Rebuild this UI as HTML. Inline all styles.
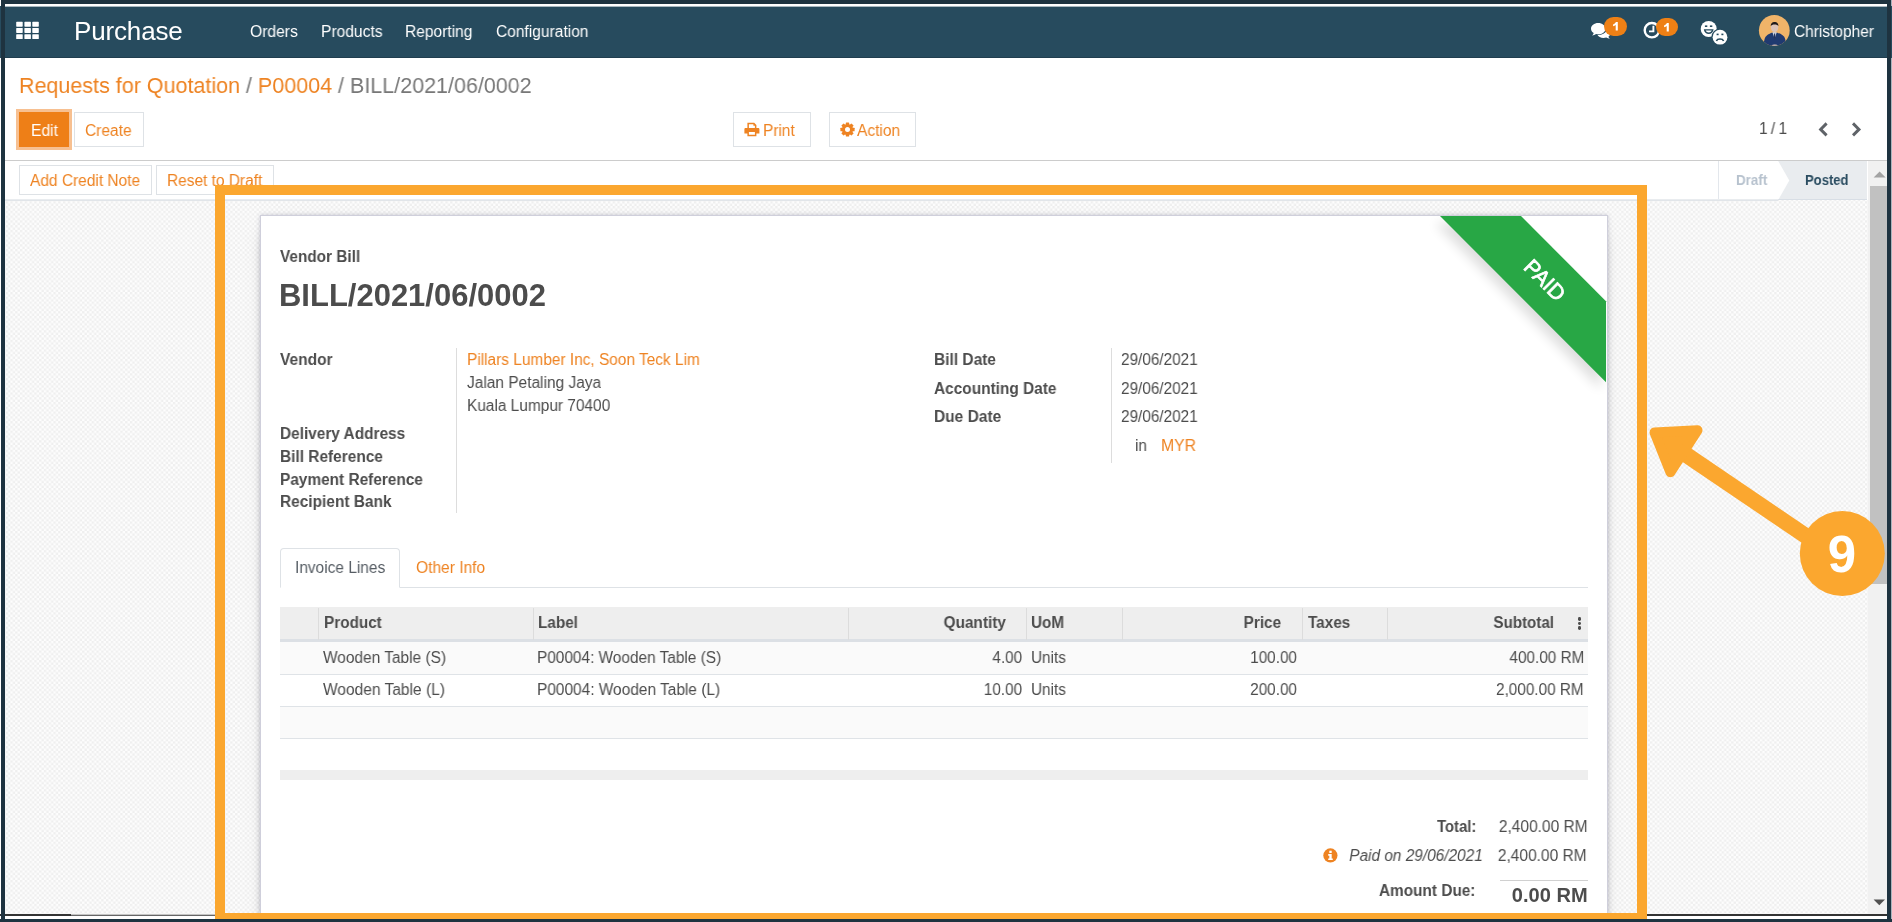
<!DOCTYPE html>
<html>
<head>
<meta charset="utf-8">
<title>Purchase - BILL/2021/06/0002</title>
<style>
*{box-sizing:border-box;margin:0;padding:0}
html,body{width:1892px;height:922px;overflow:hidden;background:#fff;font-family:"Liberation Sans",sans-serif;color:#4c4c4c;font-size:16px}
.abs{position:absolute}
.t{position:absolute;white-space:nowrap;line-height:20px;height:20px;transform:scaleX(.956);transform-origin:0 0;will-change:transform}
#frame{position:absolute;left:0;top:0;width:1892px;height:922px;overflow:hidden;background:#fff}
#nav{position:absolute;left:0;top:6px;width:1892px;height:52px;background:#274b5e}
#nav .t{color:#fff}
#bg{position:absolute;left:5px;top:200px;width:1863px;height:715px;background:#f7f7f7}
#sheet{position:absolute;left:260px;top:215px;width:1348px;height:720px;background:#fff;border:1px solid #cfcfdb;box-shadow:0 0 4px rgba(70,70,110,.25),0 5px 20px -15px #000;overflow:hidden}
.btn{position:absolute;border:1px solid #dee2e6;background:#fff}
.hl{position:absolute;height:1px;background:#dee2e6}
.vl{position:absolute;width:1px;background:#dddddd}
</style>
</head>
<body>
<div id="frame">
<div id="nav">
</div>
<svg class="abs" style="left:16px;top:21px" width="24" height="19" viewBox="0 0 24 19"><rect x="0.2" y="0.8" width="6.5" height="4.9" rx="0.6" fill="#fff"/><rect x="8.4" y="0.8" width="6.5" height="4.9" rx="0.6" fill="#fff"/><rect x="16.3" y="0.8" width="6.5" height="4.9" rx="0.6" fill="#fff"/><rect x="0.2" y="7.0" width="6.5" height="4.9" rx="0.6" fill="#fff"/><rect x="8.4" y="7.0" width="6.5" height="4.9" rx="0.6" fill="#fff"/><rect x="16.3" y="7.0" width="6.5" height="4.9" rx="0.6" fill="#fff"/><rect x="0.2" y="13.2" width="6.5" height="4.9" rx="0.6" fill="#fff"/><rect x="8.4" y="13.2" width="6.5" height="4.9" rx="0.6" fill="#fff"/><rect x="16.3" y="13.2" width="6.5" height="4.9" rx="0.6" fill="#fff"/></svg>
<div class="t" style="top:21px;left:74.0px;font-size:26px;color:#fff;letter-spacing:-0.15px;transform:scaleX(1);">Purchase</div>
<div class="t" style="top:22px;left:250.2px;color:#fff;transform:scaleX(0.9774);">Orders</div>
<div class="t" style="top:22px;left:321.0px;color:#fff;transform:scaleX(0.974);">Products</div>
<div class="t" style="top:22px;left:405.2px;color:#fff;transform:scaleX(0.9715);">Reporting</div>
<div class="t" style="top:22px;left:495.6px;color:#fff;transform:scaleX(0.9709);">Configuration</div>
<svg class="abs" style="left:1588px;top:20px" width="26" height="22" viewBox="0 0 26 22">
<path d="M15.6 18.0 C12.6 18.0 10.2 16.6 9.4 14.7 C14.3 15.0 18.6 12.6 18.9 9.4 C20.9 10.1 22.3 11.7 22.3 13.4 C22.3 14.7 21.5 15.9 20.3 16.7 C20.6 17.5 21.2 18.2 21.9 18.7 C20.6 18.7 19.3 18.3 18.2 17.6 C17.4 17.9 16.5 18.0 15.6 18.0 Z" fill="#fff"/>
<path d="M10.2 3.1 C14.2 3.1 17.4 5.6 17.4 8.7 C17.4 11.8 14.2 14.3 10.2 14.3 C9.5 14.3 8.8 14.2 8.1 14.1 C7.0 14.9 5.6 15.5 4.2 15.6 C4.2 15.6 5.4 14.6 5.7 13.1 C4.1 12.1 3.0 10.5 3.0 8.7 C3.0 5.6 6.2 3.1 10.2 3.1 Z" fill="#fff" stroke="#274b5e" stroke-width="1.1" paint-order="stroke"/>
</svg>
<div class="abs" style="left:1604px;top:17px;width:23px;height:19px;border-radius:9.5px;background:#ee8015"></div>
<svg class="abs" style="left:1612.8px;top:22.2px" width="6" height="9" viewBox="0 0 6 9"><path d="M2.9 0 H4.8 V8.5 H2.7 V2.9 C2.0 3.5 1.1 3.9 0.1 4.2 V2.5 C1.3 2.1 2.4 1.2 2.9 0 Z" fill="#fff"/></svg>
<svg class="abs" style="left:1641px;top:19px" width="22" height="22" viewBox="0 0 22 22">
<circle cx="10.9" cy="11.2" r="7.2" fill="none" stroke="#fff" stroke-width="2.4"/>
<path d="M12.4 6.8 V12.4 H8.0" fill="none" stroke="#fff" stroke-width="1.9"/>
</svg>
<div class="abs" style="left:1655.5px;top:18px;width:22px;height:18px;border-radius:9px;background:#ee8015"></div>
<svg class="abs" style="left:1663.5px;top:22.6px" width="6" height="9" viewBox="0 0 6 9"><path d="M2.9 0 H4.8 V8.5 H2.7 V2.9 C2.0 3.5 1.1 3.9 0.1 4.2 V2.5 C1.3 2.1 2.4 1.2 2.9 0 Z" fill="#fff"/></svg>
<svg class="abs" style="left:1698px;top:18px" width="34" height="30" viewBox="0 0 34 30">
<circle cx="10.7" cy="11" r="8" fill="#fff"/>
<rect x="6.9" y="7.4" width="2.4" height="1.6" fill="#274b5e"/><rect x="11.9" y="7.4" width="2.4" height="1.6" fill="#274b5e"/>
<path d="M5.8 11.2 H15.6 C15.3 14.2 13.2 15.9 10.7 15.9 C8.2 15.9 6.1 14.2 5.8 11.2 Z" fill="#274b5e"/>
<path d="M7.6 12.6 H13.8 C13.2 13.9 12.1 14.6 10.7 14.6 C9.3 14.6 8.2 13.9 7.6 12.6 Z" fill="#fff"/>
<circle cx="22" cy="19.2" r="8.6" fill="#274b5e"/>
<circle cx="22" cy="19.2" r="7.4" fill="#fff"/>
<rect x="18.6" y="15.6" width="2" height="1.6" fill="#274b5e"/><rect x="23.4" y="15.6" width="2" height="1.6" fill="#274b5e"/>
<path d="M18.4 23.0 C19.4 20.4 24.6 20.4 25.6 23.0" fill="none" stroke="#274b5e" stroke-width="1.6"/>
</svg>
<svg class="abs" style="left:1758px;top:14px" width="33" height="33" viewBox="0 0 33 33">
<defs><clipPath id="av"><circle cx="16.3" cy="16.4" r="15.4"/></clipPath></defs>
<g clip-path="url(#av)">
<rect width="33" height="33" fill="#f0b469"/>
<path d="M4.8 33 L6.6 25 C7.4 21.6 10.6 19.8 14.4 18.4 L16.6 20.6 L18.8 18.4 C22.6 19.8 26.4 21.6 27.2 25 L28.6 33 Z" fill="#203a70"/>
<path d="M14.4 18.2 L16.6 24.5 L18.8 18.2 Z" fill="#cdd5e4"/>
<path d="M16.1 19.6 L17.1 19.6 L17.4 24 L16.6 25.2 L15.8 24 Z" fill="#27335a"/>
<ellipse cx="16.6" cy="13.3" rx="3.7" ry="5.0" fill="#dcc3b8"/>
<path d="M12.8 12.3 C12.2 6.4 21.0 6.4 20.4 12.3 C19.8 9.8 13.4 9.8 12.8 12.3 Z" fill="#1f1a1a"/>
<ellipse cx="16.8" cy="31.6" rx="2.8" ry="1.0" fill="#dcc3b8"/>
</g></svg>
<div class="t" style="top:22px;left:1793.8px;color:#fff;transform:scaleX(0.9661);">Christopher</div>
<div class="t" style="top:76px;left:19.0px;font-size:22px;color:#777;transform:scaleX(0.977);"><span style="color:#ee8322">Requests for Quotation</span> / <span style="color:#ee8322">P00004</span> / BILL/2021/06/0002</div>
<div class="abs" style="left:16px;top:109px;width:56px;height:41px;background:#f7c091"></div>
<div class="abs" style="left:19px;top:112px;width:50px;height:35px;background:#ee7f17"></div>
<div class="t" style="top:121px;left:30.5px;color:#fff;transform:scaleX(0.9754);">Edit</div>
<div class="btn" style="left:74px;top:112px;width:70px;height:35px"></div>
<div class="t" style="top:121px;left:85.3px;color:#ee8322;transform:scaleX(0.9681);">Create</div>
<div class="btn" style="left:733px;top:112px;width:78px;height:35px"></div>
<svg class="abs" style="left:744px;top:122px" width="16" height="15" viewBox="0 0 16 15">
<path d="M3.4 0.8 H10.2 L12.4 3 V6.4 H10.9 V3.7 H9.4 V2.2 H4.9 V6.4 H3.4 Z" fill="#ee8322"/>
<path d="M1.6 5.9 H14.2 C14.9 5.9 15.4 6.4 15.4 7.1 V11.6 H12.4 V14.2 H3.4 V11.6 H0.4 V7.1 C0.4 6.4 0.9 5.9 1.6 5.9 Z M4.9 10.1 V12.7 H10.9 V10.1 Z" fill="#ee8322" fill-rule="evenodd"/>
</svg>
<div class="t" style="top:121px;left:763.3px;color:#ee8322;transform:scaleX(0.9633);">Print</div>
<div class="btn" style="left:829px;top:112px;width:87px;height:35px"></div>
<svg class="abs" style="left:839.5px;top:122px" width="15" height="15" viewBox="0 0 15 15"><rect x="5.8" y="0.40000000000000036" width="3.4" height="4" rx="0.5" fill="#ee8322" transform="rotate(0 7.5 7.5)"/><rect x="5.8" y="0.40000000000000036" width="3.4" height="4" rx="0.5" fill="#ee8322" transform="rotate(45 7.5 7.5)"/><rect x="5.8" y="0.40000000000000036" width="3.4" height="4" rx="0.5" fill="#ee8322" transform="rotate(90 7.5 7.5)"/><rect x="5.8" y="0.40000000000000036" width="3.4" height="4" rx="0.5" fill="#ee8322" transform="rotate(135 7.5 7.5)"/><rect x="5.8" y="0.40000000000000036" width="3.4" height="4" rx="0.5" fill="#ee8322" transform="rotate(180 7.5 7.5)"/><rect x="5.8" y="0.40000000000000036" width="3.4" height="4" rx="0.5" fill="#ee8322" transform="rotate(225 7.5 7.5)"/><rect x="5.8" y="0.40000000000000036" width="3.4" height="4" rx="0.5" fill="#ee8322" transform="rotate(270 7.5 7.5)"/><rect x="5.8" y="0.40000000000000036" width="3.4" height="4" rx="0.5" fill="#ee8322" transform="rotate(315 7.5 7.5)"/><circle cx="7.5" cy="7.5" r="4.0" fill="none" stroke="#ee8322" stroke-width="3.0"/></svg>
<div class="t" style="top:121px;left:857.1px;color:#ee8322;transform:scaleX(0.9692);">Action</div>
<div class="t" style="top:119px;left:1759.2px;color:#4c4c4c;transform:scaleX(0.9643);word-spacing:-1px;">1 / 1</div>
<svg class="abs" style="left:1816px;top:121px" width="48" height="17" viewBox="0 0 48 17">
<path d="M10.6 2.4 L4.6 8.4 L10.6 14.4" fill="none" stroke="#5f6368" stroke-width="2.9"/>
<path d="M37.0 2.4 L43.0 8.4 L37.0 14.4" fill="none" stroke="#5f6368" stroke-width="2.9"/>
</svg>
<div class="hl" style="left:5px;top:160px;width:1882px;background:#cccccc"></div>
<div class="btn" style="left:19px;top:165px;width:133px;height:30px"></div>
<div class="t" style="top:171px;left:30.3px;color:#ee8322;transform:scaleX(0.9671);">Add Credit Note</div>
<div class="btn" style="left:156px;top:165px;width:118px;height:30px"></div>
<div class="t" style="top:171px;left:167.3px;color:#ee8322;transform:scaleX(0.9655);">Reset to Draft</div>
<div class="vl" style="left:1718px;top:161px;height:39px;background:#e3e7ec"></div>
<svg class="abs" style="left:1776px;top:161px" width="92" height="39" viewBox="0 0 92 39">
<path d="M2.2 0 H91 V39 H2.2 L13.3 19.5 Z" fill="#e9ecef"/>
<path d="M2.2 38 H91 V39 H2.2 Z" fill="#d8dee5"/>
</svg>
<div class="t" style="top:170px;left:1735.9px;font-size:14px;font-weight:bold;color:#b7c2ce;transform:scaleX(0.958);">Draft</div>
<div class="t" style="top:170px;left:1805.1px;font-size:14px;font-weight:bold;color:#2b4d61;transform:scaleX(0.9317);">Posted</div>
<div class="hl" style="left:5px;top:200px;width:1863px;background:#d9d9d9"></div>
<div id="bg"></div>
<svg class="abs" style="left:5px;top:200px" width="1863" height="715" viewBox="0 0 1863 715">
<defs><pattern id="chk" width="4.78" height="4.78" patternUnits="userSpaceOnUse" x="0.6" y="1.2">
<rect width="4.78" height="4.78" fill="#fdfdfd"/><rect x="0" y="0" width="2.39" height="2.39" fill="#efefef"/><rect x="2.39" y="2.39" width="2.39" height="2.39" fill="#efefef"/>
</pattern></defs><rect width="1863" height="715" fill="url(#chk)"/></svg>
<div id="sheet"></div>
<svg class="abs" style="left:1400px;top:216px;will-change:transform" width="207" height="200" viewBox="0 0 207 200">
<defs><filter id="rs" x="-30%" y="-30%" width="160%" height="160%"><feGaussianBlur stdDeviation="6"/></filter></defs>
<path d="M36 0 L121 0 L206 85 L206 166 L40 0 Z" fill="#000" opacity=".13" filter="url(#rs)" transform="translate(-5 7)"/>
<path d="M40 0 L121 0 L206 85.3 L206 166.3 Z" fill="#28a745"/>
<text x="0" y="0" transform="translate(144.6 64.4) rotate(45)" text-anchor="middle" font-family="Liberation Sans, sans-serif" font-size="21.5" fill="#fff" stroke="#fff" stroke-width="0.7" dominant-baseline="central">PAID</text>
</svg>
<div class="t" style="top:247px;left:280.0px;font-weight:bold;transform:scaleX(0.9584);">Vendor Bill</div>
<div class="t" style="top:285px;left:278.5px;font-size:30.5px;font-weight:bold;transform:scaleX(1.0156);">BILL/2021/06/0002</div>
<div class="t" style="top:350px;left:280.0px;font-weight:bold;transform:scaleX(0.9699);">Vendor</div>
<div class="t" style="top:424px;left:280.0px;font-weight:bold;transform:scaleX(0.962);">Delivery Address</div>
<div class="t" style="top:447px;left:280.0px;font-weight:bold;transform:scaleX(0.9642);">Bill Reference</div>
<div class="t" style="top:470px;left:280.0px;font-weight:bold;transform:scaleX(0.9622);">Payment Reference</div>
<div class="t" style="top:492px;left:280.0px;font-weight:bold;transform:scaleX(0.9646);">Recipient Bank</div>
<div class="vl" style="left:456px;top:348px;height:165px"></div>
<div class="t" style="top:350px;left:467.1px;color:#ee8322;transform:scaleX(0.9636);">Pillars Lumber Inc, Soon Teck Lim</div>
<div class="t" style="top:373px;left:467.1px;transform:scaleX(0.9671);">Jalan Petaling Jaya</div>
<div class="t" style="top:396px;left:467.1px;transform:scaleX(0.9639);">Kuala Lumpur 70400</div>
<div class="t" style="top:350px;left:933.5px;font-weight:bold;transform:scaleX(0.9685);">Bill Date</div>
<div class="t" style="top:379px;left:933.5px;font-weight:bold;transform:scaleX(0.9628);">Accounting Date</div>
<div class="t" style="top:407px;left:933.5px;font-weight:bold;transform:scaleX(0.9689);">Due Date</div>
<div class="vl" style="left:1111px;top:348px;height:115px"></div>
<div class="t" style="top:350px;left:1120.8px;transform:scaleX(0.9566);">29/06/2021</div>
<div class="t" style="top:379px;left:1120.8px;transform:scaleX(0.9566);">29/06/2021</div>
<div class="t" style="top:407px;left:1120.8px;transform:scaleX(0.9566);">29/06/2021</div>
<div class="t" style="top:436px;left:1135.4px;transform:scaleX(0.9556);">in</div>
<div class="t" style="top:436px;left:1161.4px;color:#ee8322;transform:scaleX(0.9842);">MYR</div>
<div class="hl" style="left:280px;top:587px;width:1308px"></div>
<div class="abs" style="left:280px;top:548px;width:120px;height:40px;border:1px solid #dee2e6;border-bottom:1px solid #fff;border-radius:4px 4px 0 0;background:#fff"></div>
<div class="t" style="top:558px;left:294.8px;color:#555c63;transform:scaleX(0.9658);">Invoice Lines</div>
<div class="t" style="top:558px;left:415.5px;color:#ee8322;transform:scaleX(0.9711);">Other Info</div>
<div class="abs" style="left:280px;top:607px;width:1308px;height:32px;background:#eeeeee"></div>
<div class="abs" style="left:280px;top:639px;width:1308px;height:3px;background:#dce0e5"></div>
<div class="vl" style="left:318px;top:608px;height:32px;background:#dcdcdc"></div>
<div class="vl" style="left:533px;top:608px;height:32px;background:#dcdcdc"></div>
<div class="vl" style="left:848px;top:608px;height:32px;background:#dcdcdc"></div>
<div class="vl" style="left:1026px;top:608px;height:32px;background:#dcdcdc"></div>
<div class="vl" style="left:1122px;top:608px;height:32px;background:#dcdcdc"></div>
<div class="vl" style="left:1302px;top:608px;height:32px;background:#dcdcdc"></div>
<div class="vl" style="left:1387px;top:608px;height:32px;background:#dcdcdc"></div>
<div class="t" style="top:613px;left:323.8px;font-weight:bold;">Product</div>
<div class="t" style="top:613px;left:538.1px;font-weight:bold;">Label</div>
<div class="t" style="top:613px;right:886.3px;transform-origin:100% 0;font-weight:bold;transform:scaleX(0.9601);">Quantity</div>
<div class="t" style="top:613px;left:1031.3px;font-weight:bold;">UoM</div>
<div class="t" style="top:613px;right:610.7px;transform-origin:100% 0;font-weight:bold;transform:scaleX(0.9606);">Price</div>
<div class="t" style="top:613px;left:1308.3px;font-weight:bold;">Taxes</div>
<div class="t" style="top:613px;right:337.8px;transform-origin:100% 0;font-weight:bold;transform:scaleX(0.9469);">Subtotal</div>
<div class="abs" style="left:1577.5px;top:617.3px;width:3.4px;height:3.4px;border-radius:1.4px;background:#4c4c4c"></div>
<div class="abs" style="left:1577.5px;top:621.8px;width:3.4px;height:3.4px;border-radius:1.4px;background:#4c4c4c"></div>
<div class="abs" style="left:1577.5px;top:626.3px;width:3.4px;height:3.4px;border-radius:1.4px;background:#4c4c4c"></div>
<div class="abs" style="left:280px;top:642px;width:1308px;height:32px;background:#fafafa"></div>
<div class="abs" style="left:280px;top:707px;width:1308px;height:31px;background:#fafafa"></div>
<div class="hl" style="left:280px;top:674px;width:1308px;background:#dfe3e7"></div>
<div class="hl" style="left:280px;top:706px;width:1308px;background:#dfe3e7"></div>
<div class="hl" style="left:280px;top:738px;width:1308px;background:#dfe3e7"></div>
<div class="abs" style="left:280px;top:770px;width:1308px;height:10px;background:#eeeeee"></div>
<div class="t" style="top:648px;left:323.0px;transform:scaleX(0.9648);">Wooden Table (S)</div>
<div class="t" style="top:648px;left:537.3px;transform:scaleX(0.9616);">P00004: Wooden Table (S)</div>
<div class="t" style="top:648px;right:869.9px;transform-origin:100% 0;">4.00</div>
<div class="t" style="top:648px;left:1030.5px;">Units</div>
<div class="t" style="top:648px;right:594.6px;transform-origin:100% 0;">100.00</div>
<div class="t" style="top:648px;right:308.2px;transform-origin:100% 0;">400.00 RM</div>
<div class="t" style="top:680px;left:323.0px;transform:scaleX(0.9696);">Wooden Table (L)</div>
<div class="t" style="top:680px;left:537.3px;transform:scaleX(0.9649);">P00004: Wooden Table (L)</div>
<div class="t" style="top:680px;right:869.9px;transform-origin:100% 0;">10.00</div>
<div class="t" style="top:680px;left:1030.5px;">Units</div>
<div class="t" style="top:680px;right:594.6px;transform-origin:100% 0;">200.00</div>
<div class="t" style="top:680px;right:308.2px;transform-origin:100% 0;">2,000.00 RM</div>
<div class="t" style="top:817px;right:416.1px;transform-origin:100% 0;font-weight:bold;transform:scaleX(0.9278);">Total:</div>
<div class="t" style="top:817px;right:304.0px;transform-origin:100% 0;transform:scaleX(0.9693);">2,400.00 RM</div>
<svg class="abs" style="left:1323px;top:848px" width="15" height="15" viewBox="0 0 15 15">
<circle cx="7.4" cy="7.4" r="7.1" fill="#ee8322"/>
<rect x="6.3" y="2.7" width="2.4" height="2.3" fill="#fff"/>
<path d="M5.2 6.1 H8.7 V10.5 H9.8 V12.1 H5.2 V10.5 H6.3 V7.7 H5.2 Z" fill="#fff"/>
</svg>
<div class="t" style="top:846px;right:409.2px;transform-origin:100% 0;font-style:italic;transform:scaleX(0.9626);">Paid on 29/06/2021</div>
<div class="t" style="top:846px;right:305.2px;transform-origin:100% 0;transform:scaleX(0.9693);">2,400.00 RM</div>
<div class="hl" style="left:1500px;top:880px;width:88px;background:#d0d0d0"></div>
<div class="t" style="top:881px;right:416.1px;transform-origin:100% 0;font-weight:bold;transform:scaleX(0.9608);">Amount Due:</div>
<div class="t" style="top:885px;right:304.0px;transform-origin:100% 0;font-size:20px;font-weight:bold;transform:scaleX(1.0027);">0.00 RM</div>
<div class="abs" style="left:1868px;top:161px;width:19px;height:754px;background:#f1f1f1"></div>
<div class="abs" style="left:1869.5px;top:186px;width:17.5px;height:398px;background:#c1c1c1"></div>
<svg class="abs" style="left:1873px;top:171px" width="13" height="7" viewBox="0 0 13 7"><path d="M0.6 6.4 L6.6 0.6 L12.6 6.4 Z" fill="#a3a3a3"/></svg>
<svg class="abs" style="left:1873px;top:899px" width="13" height="7" viewBox="0 0 13 7"><path d="M0.6 0.4 L12 0.4 L6.3 6.2 Z" fill="#505050"/></svg>
<div class="abs" style="left:5px;top:199px;width:1773px;height:1px;background:#e9ecef"></div>
<div class="abs" style="left:5px;top:200px;width:1773px;height:1px;background:#e1e5e9"></div>
<div class="abs" style="left:0;top:914px;width:71px;height:2px;background:#333"></div>
<div class="abs" style="left:71px;top:914px;width:150px;height:1px;background:#c4c4c4"></div>
<div class="abs" style="left:71px;top:915px;width:150px;height:1px;background:#666"></div>
<div class="abs" style="left:1640px;top:914px;width:247px;height:2px;background:#333"></div>
<div class="abs" style="left:0;top:916px;width:1892px;height:3px;background:#fff"></div>
<div class="abs" style="left:1px;top:0;width:1891px;height:4px;background:#1e3340"></div>
<div class="abs" style="left:5px;top:6px;width:1882px;height:1px;background:#a8b7bf"></div>
<div class="abs" style="left:1px;top:0;width:4px;height:922px;background:#1e3340"></div>
<div class="abs" style="left:1887px;top:0;width:4px;height:922px;background:#1e3340"></div>
<div class="abs" style="left:0;top:919px;width:1892px;height:3px;background:#1e3340"></div>
<div class="abs" style="left:1891px;top:0;width:1px;height:6px;background:#aab4bd"></div>
<div class="abs" style="left:1891px;top:58px;width:1px;height:861px;background:#aab4bd"></div>
<div class="abs" style="left:5px;top:57px;width:1882px;height:1px;background:#203e4f"></div>
<div class="abs" style="left:215px;top:185px;width:1432px;height:734px;border:10px solid #fba72f;border-bottom-width:6px"></div>
<svg class="abs" style="left:1630px;top:400px" width="262" height="222" viewBox="1630 400 262 222">
<line x1="1842" y1="560.5" x2="1683" y2="452.6" stroke="#fba72f" stroke-width="16"/>
<path d="M1654.5 432.5 L1697.5 430.2 L1670.4 472.2 Z" fill="#fba72f" stroke="#fba72f" stroke-width="10" stroke-linejoin="round"/>
<circle cx="1842.3" cy="553.5" r="42.5" fill="#fba72f"/>
</svg>
<div class="t" style="left:1812px;width:60px;text-align:center;top:525px;font-size:51px;font-weight:bold;color:#fff;height:60px;line-height:60px;transform:none">9</div>
</div>
</body>
</html>
